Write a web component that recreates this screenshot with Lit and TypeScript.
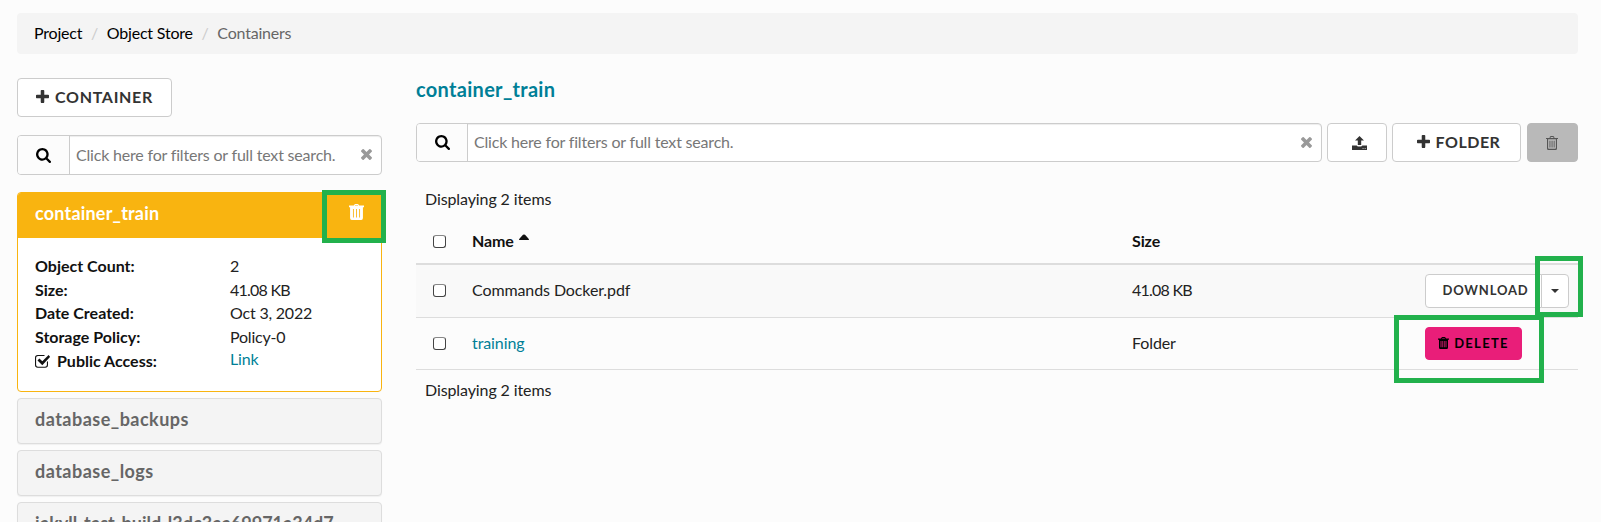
import { LitElement, html, css, svg } from "lit";
import { customElement, property } from "lit/decorators.js";

const ICONS: Record<string, { box: string; d: string }> = {
  search: {
    box: "0 0 1664 1664",
    d: "M1152 704q0-185-131.5-316.5t-316.5-131.5-316.5 131.5-131.5 316.5 131.5 316.5 316.5 131.5 316.5-131.5 131.5-316.5zm512 832q0 52-38 90t-90 38q-54 0-90-38l-343-342q-179 124-399 124-143 0-273.5-55.5t-225-150-150-225-55.5-273.5 55.5-273.5 150-225 225-150 273.5-55.5 273.5 55.5 225 150 150 225 55.5 273.5q0 220-124 399l343 343q37 37 37 90z",
  },
  plus: {
    box: "0 128 1408 1408",
    d: "M1408 736v192q0 40-28 68t-68 28h-416v416q0 40-28 68t-68 28h-192q-40 0-68-28t-28-68v-416h-416q-40 0-68-28t-28-68v-192q0-40 28-68t68-28h416v-416q0-40 28-68t68-28h192q40 0 68 28t28 68v416h416q40 0 68 28t28 68z",
  },
  times: {
    box: "110 366 1188 1188",
    d: "M1298 1322q0 40-28 68l-136 136q-28 28-68 28t-68-28l-294-294-294 294q-28 28-68 28t-68-28l-136-136q-28-28-28-68t28-68l294-294-294-294q-28-28-28-68t28-68l136-136q28-28 68-28t68 28l294 294 294-294q28-28 68-28t68 28l136 136q28 28 28 68t-28 68l-294 294 294 294q28 28 28 68z",
  },
  trash: {
    box: "0 0 12 14",
    d: "M3.500 2Q3.700 0 5 0h2q1.300 0 1.500 2H12v1.100h-1V12.400Q11 14 9.600 14H2.400Q1 14 1 12.400V3.100H0V2zM4.500 2h3L7.200 1H4.800zM2.100 3.200V12q0 .8.7.8h6.400q.7 0 .7-.8V3.200zM3.500 4.800h.9v6.700h-.9zM5.600 4.800h.9v6.700h-.9zM7.700 4.800h.9v6.700h-.9z",
  },
  trashSolid: {
    box: "0 0 14 16",
    d: "M4.400 1.600Q5 0 6 0h2q1 0 1.600 1.600H14v1.600h-1V14q0 2-1.600 2H2.600Q1 16 1 14V3.200H0V1.600zM5.300 1.600h3.400L8.200 1H5.800zM3.700 5v8.500h.8V5zM6.600 5v8.500h.8V5zM9.500 5v8.500h.8V5z",
  },
  trashSmall: {
    box: "0 0 11 12",
    d: "M3 1.500Q3.400 0 4.300 0h2.400Q7.600 0 8 1.500H11v1.200h-1V10.500Q10 12 8.700 12H2.300Q1 12 1 10.500V2.700H0V1.500zM4 1.500h3L6.600 .9H4.400zM2.600 4v6.300h.8V4zM4.400 4v6.300h.7V4zM5.900 4v6.300h.7V4zM7.600 4v6.300h.8V4z",
  },
  upload: {
    box: "0 0 15 14",
    d: "M7.500 0L12 4.600H9.200V9H5.800V4.600H3zM0 9.600h4.700q.5 1 1.600 1h2.400q1.100 0 1.600-1H15V14H0zM10.600 12.300v.8h.9v-.8zM12.700 12.300v.8h.9v-.8z",
  },
  caretUp: { box: "0 0 10 6", d: "M0 6Q0 5 .6 4.500L4 .8Q5 0 6 .8L9.400 4.500Q10 5 10 6z" },
  checked: {
    box: "0 0 15 14",
    d: "M2.800 1H10l-1 1H3Q1.100 2 1.100 3.800v7Q1.100 12.800 3 12.800h7q1.900 0 1.900-2V8L13 7v4q0 2.800-2.800 2.800H2.800Q0 13.800 0 11V3.800Q0 1 2.800 1zM13.600 .9L15.100 2.800 7.300 11.200 2.500 6.400 4.400 4.500l2.900 2.700z",
  },
};

@customElement("ui-icon")
class UiIcon extends LitElement {
  static styles = css`
    :host { display: inline-block; flex: none; }
    .icon { display: block; width: 100%; height: 100%; fill: currentColor; }
  `;
  @property() name = "";
  render() {
    const i = ICONS[this.name];
    return html`<svg class="icon" viewBox=${i.box} preserveAspectRatio="none">${svg`<path fill-rule="evenodd" d=${i.d}></path>`}</svg>`;
  }
}

@customElement("app-root")
class AppRoot extends LitElement {
  static styles = css`
    :host { display: block; position: relative; box-sizing: border-box; height: 522px; overflow: hidden; padding: 13px 23px 0 17px; background: #fcfcfc; color: #222; font: 16px/24px Lato, "Open Sans", sans-serif; }
    * { box-sizing: border-box; }
    .crumbs { display: flex; height: 41px; align-items: center; padding: 0 17px 1px; border-radius: 4px; background: #f4f4f4; color: #000; letter-spacing: -.2px; }
    .sep { width: 24.500px; text-align: center; color: #ccc; }
    .muted { color: #666; }
    .layout { display: grid; grid-template-columns: 365px 1162px; column-gap: 34px; }
    .side { padding-top: 24px; }
    .btn { display: flex; align-items: center; justify-content: center; height: 39px; padding-bottom: 2px; border: 1px solid #ccc; border-radius: 4px; background: #fff; color: #333; font-weight: 700; letter-spacing: .7px; }
    .btn.container { width: 155px; }
    .plus { width: 13px; height: 13px; margin-right: 6px; }
    .search { display: flex; border: 1px solid #ccc; border-radius: 4px; background: #fff; height: 40px; color: #777; box-shadow: inset 0 1px 1px rgba(0,0,0,.075); }
    .side .search { margin: 18px 0 17px; }
    .lens { display: flex; width: 52px; flex: none; align-items: center; justify-content: center; border-right: 1px solid #ccc; background: #fcfcfc; color: #000; border-radius: 3px 0 0 3px; }
    .lens ui-icon { width: 15px; height: 15px; }
    .hint { flex: 1; padding-left: 6px; line-height: 38px; white-space: nowrap; letter-spacing: -.19px; }
    .clear { width: 11px; height: 11px; margin: 13px 9px 0 0; color: #999; }
    .card { border: 1px solid #ddd; border-radius: 4px; background: #f4f4f4; height: 46px; margin-bottom: 6px; padding: 8px 17px; font-size: 18px; font-weight: 700; letter-spacing: .48px; color: #666; box-shadow: 0 1px 1px rgba(0,0,0,.05); }
    .card.long { letter-spacing: 0; }
    .open { overflow: hidden; border: 1px solid #f9b410; border-radius: 4px; background: #fff; height: 200px; margin-bottom: 6px; }
    .head { display: flex; justify-content: space-between; height: 45px; padding: 8px 17px; background: #f9b410; color: #fff; font-size: 18px; font-weight: 700; letter-spacing: .2px; }
    .head ui-icon { width: 15px; height: 16px; margin-top: 3px; }
    .facts { display: grid; grid-template-columns: 195px 1fr; grid-auto-rows: 23.600px; padding: 16px 17px; color: #222; letter-spacing: -.2px; }
    .key { font-weight: 700; color: #111; white-space: nowrap; letter-spacing: 0; }
    .access { display: flex; align-items: center; padding-top: 1px; }
    .access ui-icon { width: 15px; height: 14px; margin-right: 7px; }
    .link { color: #007f97; }
    .facts .link { line-height: 22px; }
    .num { letter-spacing: -.75px; }
    .title { padding-top: 23px; height: 69px; font-size: 20px; font-weight: 700; letter-spacing: .3px; color: #007f97; }
    .tools { display: flex; height: 39px; }
    .tools .search { width: 906px; height: 39px; margin-right: 5px; }
    .tools .lens { width: 51px; }
    .tools .hint { line-height: 36px; }
    .btn.upload { width: 60px; margin-right: 5px; padding: 0 0 0 4px; }
    .upload ui-icon { width: 15px; height: 14px; }
    .btn.folder { width: 129px; margin-right: 6px; padding-left: 4px; letter-spacing: .5px; }
    .btn.trash { width: 51px; padding: 0 1px 0 0; border-color: #b9b9b9; background: #b9b9b9; color: #555; }
    .trash ui-icon { width: 12px; height: 14px; }
    .count { padding: 25px 9px 0; height: 59px; letter-spacing: -.1px; }
    .row { display: grid; grid-template-columns: 16px 40px 660px 292px 1fr; align-items: center; height: 52px; border-bottom: 1px solid #ddd; letter-spacing: -.1px; }
    .row.names { height: 44px; border-bottom: 2px solid #ddd; font-weight: 700; color: #111; }
    .row.odd { height: 53px; background: #f9f9f9; }
    .text { padding-bottom: 2px; }
    .check { grid-column: 2; width: 13px; height: 13px; margin-left: 1px; border: 1px solid #444; border-top-color: #888; border-radius: 3px; background: #fff; }
    .odd .check, .names .check { margin-top: -1px; }
    .name { display: flex; }
    .caret-up { width: 10px; height: 6px; margin: 5px 0 0 5px; }
    .caret-down { border: 4.500px solid transparent; border-top-width: 4px; border-bottom: 0; border-top-color: #333; }
    .group { display: flex; padding-left: 1px; }
    .btn.small { height: 34px; font-size: 13px; }
    .btn.download { width: 117px; padding-left: 4px; border-radius: 4px 0 0 4px; letter-spacing: .8px; }
    .btn.more { width: 28px; margin-left: -1px; padding: 0; border-radius: 0 4px 4px 0; }
    .btn.delete { width: 97px; height: 33px; padding-bottom: 1px; border-color: #e91e79; background: #e91e79; color: #000; letter-spacing: 1.300px; }
    .delete ui-icon { width: 11px; height: 12px; margin-right: 5px; }
    .count.last { padding-top: 8px; }
    .mark { position: absolute; border: 5px solid #22b14c; }
    .m1 { left: 322px; top: 190px; width: 64px; height: 53px; }
    .m2 { left: 1535px; top: 256px; width: 48px; height: 61px; }
    .m3 { left: 1394px; top: 315px; width: 150px; height: 68px; }
  `;

  searchBox() {
    return html`<div class="search"><span class="lens"><ui-icon name="search"></ui-icon></span><span class="hint">Click here for filters or full text search.</span><ui-icon class="clear" name="times"></ui-icon></div>`;
  }

  render() {
    return html`
      <nav class="crumbs"><span>Project</span><span class="sep">/</span><span>Object Store</span><span class="sep">/</span><span class="muted">Containers</span></nav>
      <div class="layout">
        <aside class="side">
          <div class="btn container"><ui-icon class="plus" name="plus"></ui-icon><span>CONTAINER</span></div>
          ${this.searchBox()}
          <div class="open">
            <div class="head"><span>container_train</span><ui-icon name="trashSolid"></ui-icon></div>
            <div class="facts">
              <span class="key">Object Count:</span><span>2</span>
              <span class="key">Size:</span><span class="num">41.08 KB</span>
              <span class="key">Date Created:</span><span>Oct 3, 2022</span>
              <span class="key">Storage Policy:</span><span>Policy-0</span>
              <span class="key access"><ui-icon name="checked"></ui-icon>Public Access:</span><span class="link">Link</span>
            </div>
          </div>
          <div class="card">database_backups</div>
          <div class="card">database_logs</div>
          <div class="card long">jekyll-test-build-l3dc3ea69971a34d7</div>
        </aside>
        <main>
          <div class="title">container_train</div>
          <div class="tools">
            ${this.searchBox()}
            <div class="btn upload"><ui-icon name="upload"></ui-icon></div>
            <div class="btn folder"><ui-icon class="plus" name="plus"></ui-icon><span>FOLDER</span></div>
            <div class="btn trash"><ui-icon name="trash"></ui-icon></div>
          </div>
          <div class="count">Displaying 2 items</div>
          <div class="row names"><span class="check"></span><span class="text name">Name<ui-icon class="caret-up" name="caretUp"></ui-icon></span><span class="text">Size</span></div>
          <div class="row odd"><span class="check"></span><span class="text">Commands Docker.pdf</span><span class="text num">41.08 KB</span>
            <div class="group"><div class="btn small download">DOWNLOAD</div><div class="btn small more"><span class="caret-down"></span></div></div>
          </div>
          <div class="row"><span class="check"></span><span class="text link">training</span><span class="text">Folder</span>
            <div class="group"><div class="btn small delete"><ui-icon name="trashSmall"></ui-icon><span>DELETE</span></div></div>
          </div>
          <div class="count last">Displaying 2 items</div>
        </main>
      </div>
      <div class="mark m1"></div><div class="mark m2"></div><div class="mark m3"></div>
    `;
  }
}
